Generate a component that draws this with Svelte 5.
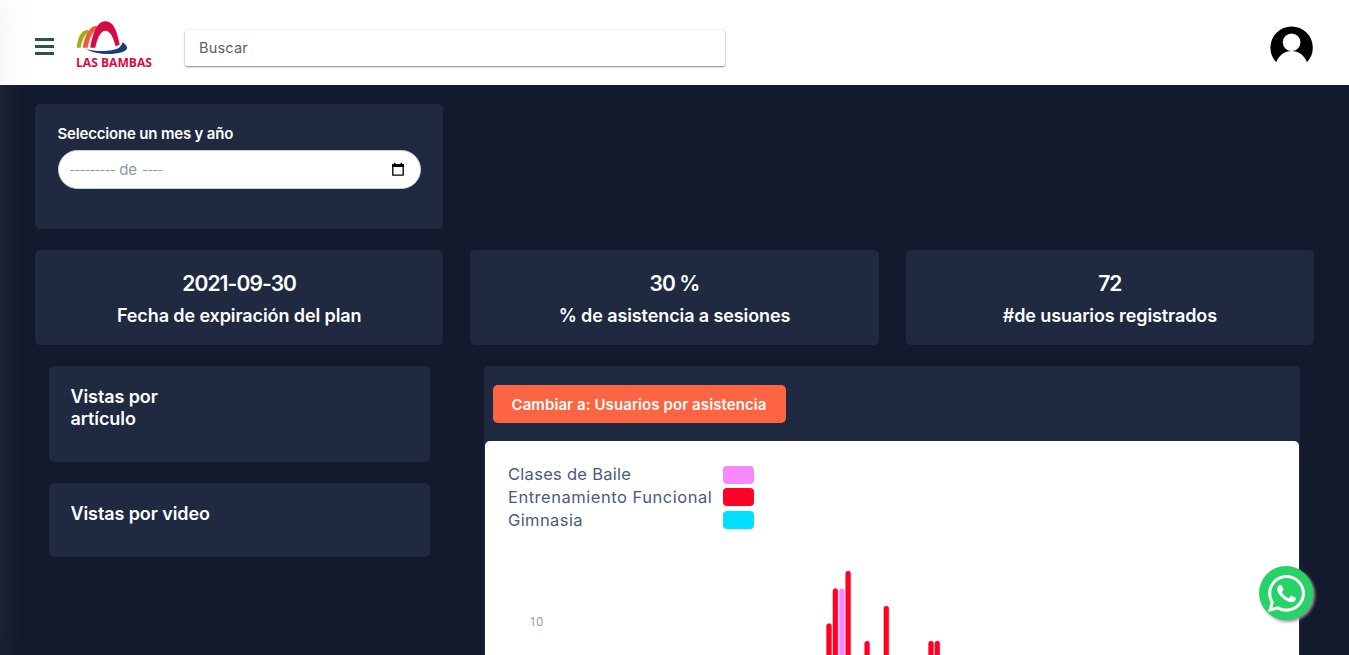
<script>
  const stats = [
    { value: '2021-09-30', label: 'Fecha de expiración del plan' },
    { value: '30 %', label: '% de asistencia a sesiones' },
    { value: '72', label: '#de usuarios registrados' },
  ];
  const legend = [
    { name: 'Clases de Baile', color: '#f888ff' },
    { name: 'Entrenamiento Funcional', color: '#ff0026' },
    { name: 'Gimnasia', color: '#00e1ff' },
  ];
  const red = '#ff0026';
  const bars = [
    { x: 341, y: 73.5, color: red },
    { x: 347.4, y: 38.5, color: red },
    { x: 353.8, y: 38.5, color: '#f888ff' },
    { x: 360.1, y: 21, color: red },
    { x: 379.1, y: 91, color: red },
    { x: 398.3, y: 56, color: red },
    { x: 443, y: 91, color: red },
    { x: 449.3, y: 91, color: red },
  ];
</script>

<div class="page">
  <aside class="drawer"></aside>
  <header>
    <button class="menu" aria-label="Menú"><i></i><i></i><i></i></button>
    <svg class="logo" viewBox="0 0 270 180" width="90" height="60">
      <path d="M26 101C28 73 40 47 57 48C61 48 63 50 63 53C50 60 43 78 38 101Z" fill="#a9ab1c" />
      <path d="M44 101C50 67 64 35 84 36C88 36 90 39 89 42C72 53 64 76 59 101Z" fill="#f2583a" />
      <path d="M67 101C74 57 88 22 111 22C138 22 147 52 155 92L143 97C135 69 127 50 112 50C97 50 87 74 82 101Z" fill="#d60b46" />
      <path d="M56 105C82 114 134 113 152 102C158 97 162 92 163 85C171 89 179 98 177 104C172 115 140 121 112 120C86 118 64 113 56 105Z" fill="#1d3c78" />
      <text x="24" y="158" textLength="228" lengthAdjust="spacingAndGlyphs">LAS BAMBAS</text>
    </svg>
    <div class="search">Buscar</div>
    <svg class="avatar" viewBox="0.4 0 44 38" width="44" height="38">
      <path d="M6.7 36.3A21.2 21.2 0 1 1 37.3 36.3C35 29.5 29 25 22 25S9 29.5 6.7 36.3Z" />
      <circle cx="22" cy="16.3" r="8.8" fill="#fff" />
    </svg>
  </header>

  <main>
    <section class="grid">
      <div class="card picker">
        <div class="label">Seleccione un mes y año</div>
        <div class="month">
          <span class="dash">---------</span><span class="de">de</span><span class="dash">----</span>
          <svg viewBox="0 0 14 15" width="14" height="15">
            <path d="M1.8 3.2H12.2V13.2H1.8Z" fill="none" stroke="#000" stroke-width="1.3" />
            <path d="M1.2 2H12.8V5H1.2ZM3 .7H4.4V3H3ZM9.6 .7H11V3H9.6Z" />
          </svg>
        </div>
      </div>
    </section>

    <section class="grid">
      {#each stats as s}
        <div class="card stat">
          <h2>{s.value}</h2>
          <h3>{s.label}</h3>
        </div>
      {/each}
    </section>

    <section class="details">
      <div class="views">
        <div class="card view first"><h3>Vistas por<br />artículo</h3></div>
        <div class="card view second"><h3>Vistas por video</h3></div>
      </div>
      <div class="card panel">
        <button class="switch"><span>Cambiar a: Usuarios por asistencia</span></button>
        <div class="chart">
          <div class="legend">
            {#each legend as l}
              <span>{l.name}</span><i style="background:{l.color}"></i>
            {/each}
          </div>
          <svg class="plot" viewBox="0 0 786 170" width="786" height="170">
            <text x="41.5" y="75.5">10</text>
            {#each bars as b}
              <rect x={b.x - 2.5} y={b.y} width="5" height="200" rx="2.5" fill={b.color} stroke={b.color} stroke-opacity="0.35" stroke-width="0.9" />
            {/each}
          </svg>
        </div>
      </div>
    </section>
  </main>

  <a class="whatsapp" href="#chat" aria-label="WhatsApp">
    <svg viewBox="0 32 448 448" width="37" height="37">
      <path fill="#fff" d="M380.9 97.1C339 55.1 283.2 32 223.9 32c-122.4 0-222 99.6-222 222 0 39.1 10.2 77.3 29.6 111L0 480l117.7-30.9c32.4 17.7 68.9 27 106.1 27h.1c122.3 0 224.1-99.6 224.1-222 0-59.3-25.2-115-67.1-157zm-157 341.6c-33.2 0-65.7-8.9-94-25.7l-6.7-4-69.8 18.3L72 359.2l-4.4-7c-18.5-29.4-28.2-63.3-28.2-98.2 0-101.7 82.8-184.5 184.6-184.5 49.3 0 95.6 19.2 130.4 54.1 34.8 34.9 56.2 81.2 56.1 130.5 0 101.8-84.9 184.6-186.6 184.6zm101.2-138.2c-5.5-2.8-32.8-16.2-37.9-18-5.1-1.9-8.8-2.8-12.5 2.8-3.7 5.6-14.3 18-17.6 21.8-3.2 3.7-6.5 4.2-12 1.4-32.6-16.3-54-29.1-75.5-66-5.7-9.8 5.7-9.1 16.3-30.3 1.8-3.7.9-6.9-.5-9.7-1.4-2.8-12.5-30.1-17.1-41.2-4.5-10.8-9.1-9.3-12.5-9.5-3.2-.2-6.9-.2-10.6-.2-3.7 0-9.7 1.4-14.8 6.9-5.1 5.6-19.4 19-19.4 46.3 0 27.3 19.9 53.7 22.6 57.4 2.8 3.7 39.1 59.7 94.8 83.8 35.2 15.2 49 16.5 66.6 13.9 10.7-1.6 32.8-13.4 37.4-26.4 4.6-13 4.6-24.1 3.2-26.4-1.3-2.5-5-3.9-10.5-6.6z" />
    </svg>
  </a>
</div>

<style>
  :global(body) { margin: 0; overflow: hidden; background: #141a2d; }
  * { box-sizing: border-box; }
  .page { position: relative; height: 655px; overflow: hidden; background: #141a2d; font-family: Inter, "Liberation Sans", sans-serif; color: #fff; }
  .drawer { position: absolute; z-index: 5; left: -250px; top: 0; width: 250px; height: 655px; box-shadow: 0 0 32px rgba(136, 152, 170, 0.15); }
  header { height: 85px; background: #fff; display: flex; align-items: flex-start; padding: 0 35px; }
  .menu { width: 19px; height: 17px; margin: 38px 14px 0 0; padding: 0; border: 0; background: none; display: flex; flex-direction: column; justify-content: space-between; }
  .menu i { height: 3px; background: #2c5350; }
  .logo { margin-top: 14px; }
  .logo text { font: 700 36px "Open Sans", sans-serif; fill: #d60b46; }
  .search { width: 540px; height: 36px; margin: 30px 0 0 27px; padding-left: 14px; line-height: 36px; font-size: 14.5px; letter-spacing: 0.2px; color: #5f6062; border-radius: 2px; box-shadow: 0 1px 2px rgba(0, 0, 0, 0.45), 0 0 2px rgba(0, 0, 0, 0.12); }
  .avatar { margin: 26px 0 0 auto; }
  main { padding: 19px 35px 0; }
  .grid { display: grid; grid-template-columns: repeat(3, 1fr); column-gap: 27px; margin-bottom: 21px; }
  .card { background: #1f2940; border-radius: 5px; }
  .picker { height: 125px; padding: 20px 22px 0 22.5px; }
  .label { font-size: 15px; font-weight: 600; line-height: 20px; letter-spacing: -0.18px; white-space: nowrap; }
  .month { display: flex; align-items: center; height: 39px; margin-top: 6px; padding: 0 15px 0 11px; border: 1px solid #cad1d7; border-radius: 20px; background: #fff; color: #8898aa; font-size: 15px; }
  .month svg { margin-left: auto; }
  .dash { font-size: 12px; letter-spacing: -0.5px; }
  .de { margin: 0 5px 0 4.5px; }
  h2, h3 { margin: 0; font-weight: 600; white-space: nowrap; }
  .stat { height: 95px; padding-top: 21px; text-align: center; }
  .stat h2 { font-size: 21px; line-height: 26px; letter-spacing: -0.9px; }
  h3 { font-size: 18px; line-height: 22px; letter-spacing: -0.1px; }
  .stat h3 { margin-top: 8px; }
  .details { display: flex; gap: 54px; padding: 0 14px; }
  .views { width: 381px; display: flex; flex-direction: column; gap: 21px; }
  .view { padding: 20px 21.5px 0; }
  .first { height: 96px; }
  .second { height: 74px; }
  .panel { width: 816px; height: 320px; padding: 19px 1px 0; }
  .switch { display: block; width: 293px; height: 38px; margin: 0 0 18px 8px; padding: 0 1px 0 0; border: 0; border-radius: 5px; background: #fd6441; color: #fff; font: 600 15px Inter, sans-serif; letter-spacing: 0.09px; white-space: nowrap; }
  .chart { height: 260px; border-radius: 5px 5px 0 0; background: #fff; padding: 22px 3px 0; color: #4c5b78; }
  .legend { display: grid; grid-template-columns: 215px 31px; align-items: center; padding-left: 20px; font-size: 16.5px; letter-spacing: 0.28px; line-height: 23px; white-space: nowrap; }
  .legend span:nth-of-type(2) { letter-spacing: 0.52px; }
  .legend span:nth-of-type(3) { letter-spacing: 0.4px; }
  .legend i { height: 18px; border-radius: 4px; }
  .legend i:nth-of-type(n + 2) { margin-top: -2px; }
  .plot { display: block; margin-top: 18px; }
  .plot text { font: 12px "Open Sans", sans-serif; fill: #8898aa; }
  .whatsapp { position: absolute; left: 1259px; top: 566px; width: 54px; height: 54px; border-radius: 50%; background: #25d366; box-shadow: 2px 2px 3px #999; display: flex; align-items: center; justify-content: center; }
</style>
